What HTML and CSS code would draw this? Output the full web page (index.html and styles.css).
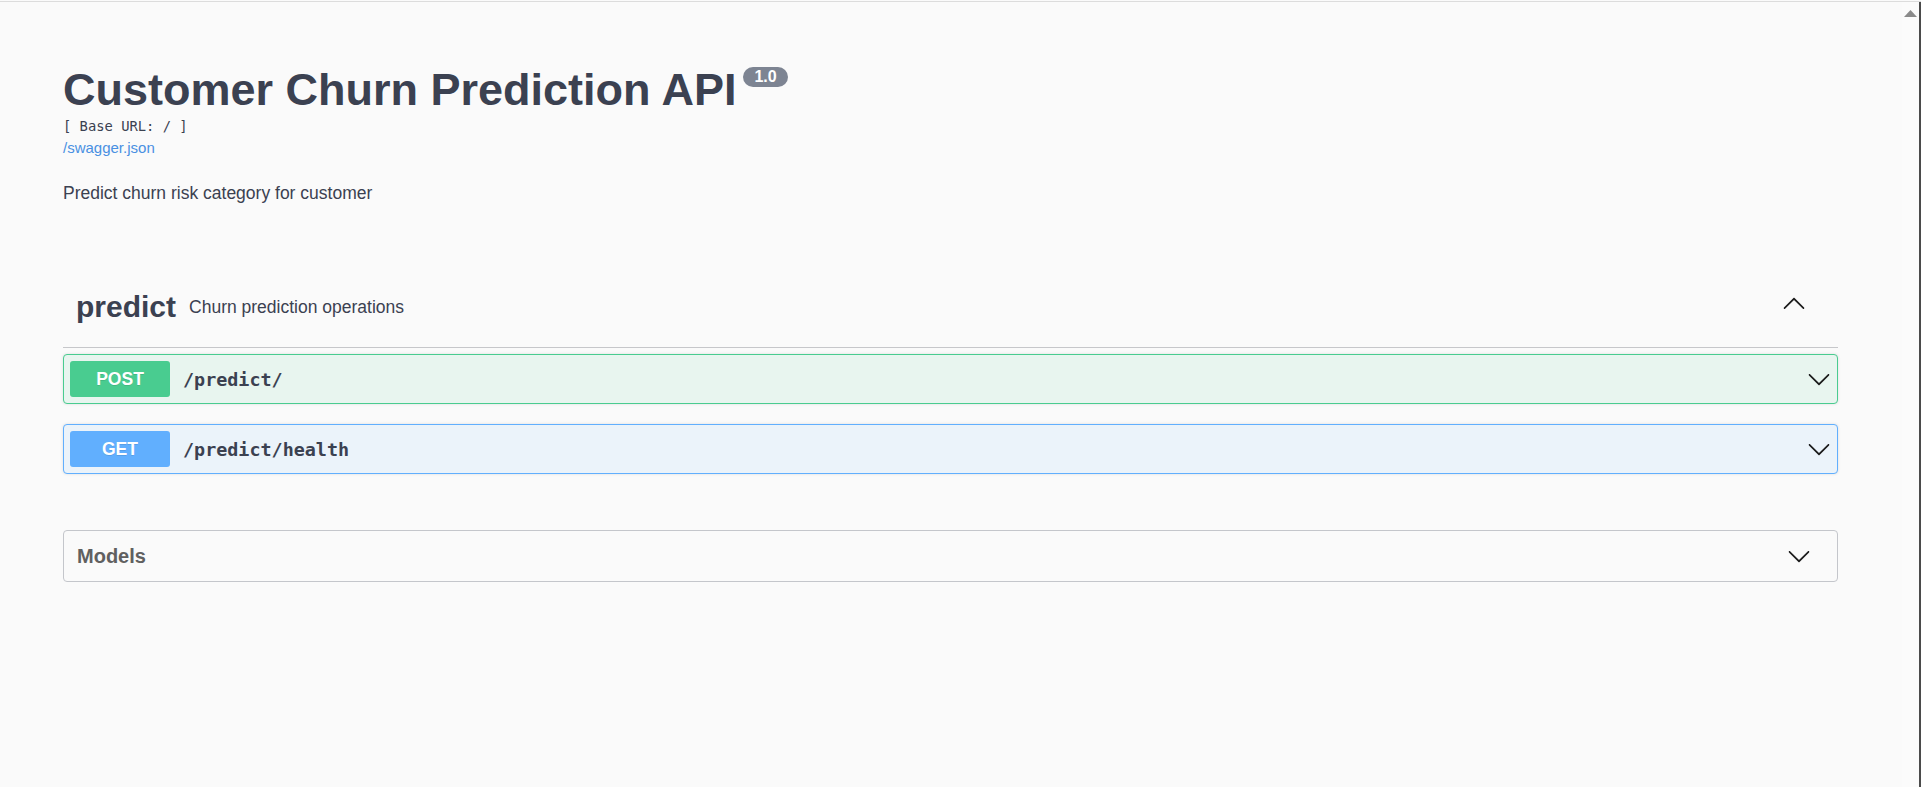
FILE: index.html
```html
<!DOCTYPE html>
<html lang="en">
<head>
<meta charset="utf-8">
<title>Customer Churn Prediction API</title>
<link rel="stylesheet" href="styles.css">
</head>
<body>
<div class="topline"></div>
<div class="layout">
  <main class="main">
    <section class="info">
      <h2 class="title"><span>Customer Churn Prediction API</span><span class="version">1.0</span></h2>
      <div class="base-url">[ Base URL: / ]</div>
      <a class="spec-link" href="#">/swagger.json</a>
      <p class="description">Predict churn risk category for customer</p>
    </section>

    <section class="tag">
      <div class="tag-header">
        <span class="tag-name">predict</span>
        <span class="tag-desc">Churn prediction operations</span>
        <svg class="arrow arrow-up" viewBox="0 0 20 20" width="24" height="24"><path d="M17.418 6.109c.272-.268.709-.268.979 0s.271.701 0 .969l-7.908 7.830c-.27.268-.707.268-.979 0l-7.908-7.830c-.27-.268-.27-.701 0-.969.271-.268.709-.268.979 0L10 13.250l7.418-7.141z"/></svg>
      </div>
      <div class="ops">
        <div class="op op-post">
          <span class="method">POST</span>
          <span class="path">/predict/</span>
          <svg class="arrow" viewBox="0 0 20 20" width="24" height="24"><path d="M17.418 6.109c.272-.268.709-.268.979 0s.271.701 0 .969l-7.908 7.830c-.27.268-.707.268-.979 0l-7.908-7.830c-.27-.268-.27-.701 0-.969.271-.268.709-.268.979 0L10 13.250l7.418-7.141z"/></svg>
        </div>
        <div class="op op-get">
          <span class="method">GET</span>
          <span class="path">/predict/health</span>
          <svg class="arrow" viewBox="0 0 20 20" width="24" height="24"><path d="M17.418 6.109c.272-.268.709-.268.979 0s.271.701 0 .969l-7.908 7.830c-.27.268-.707.268-.979 0l-7.908-7.830c-.27-.268-.27-.701 0-.969.271-.268.709-.268.979 0L10 13.250l7.418-7.141z"/></svg>
        </div>
      </div>
    </section>

    <section class="models">
      <span class="models-title">Models</span>
      <svg class="arrow" viewBox="0 0 20 20" width="24" height="24"><path d="M17.418 6.109c.272-.268.709-.268.979 0s.271.701 0 .969l-7.908 7.830c-.27.268-.707.268-.979 0l-7.908-7.830c-.27-.268-.27-.701 0-.969.271-.268.709-.268.979 0L10 13.250l7.418-7.141z"/></svg>
    </section>
  </main>
  <div class="scrollbar">
    <svg class="scroll-up" viewBox="0 0 13 7" width="13" height="7"><polygon points="6.5,0 13,7 0,7"/></svg>
  </div>
</div>
</body>
</html>
```

FILE: styles.css
```css
html, body {
  margin: 0;
  padding: 0;
  background: #fafafa;
}

body {
  font-family: "Liberation Sans", Arial, sans-serif;
  color: #3b4151;
  overflow: hidden;
  height: 787px;
}

.topline {
  margin-top: 1px;
  height: 1px;
  background: #dcdcdc;
}

.layout {
  display: flex;
  height: 785px;
}

.main {
  flex: 1;
  min-width: 0;
  padding: 0 64px 0 63px;
}

.scrollbar {
  width: 17px;
  border-right: 2px solid #4b4b4b;
  background: #fbfbfb;
  display: flex;
  justify-content: center;
  align-items: flex-start;
}

.scroll-up {
  margin-top: 8px;
  fill: #8a8a8a;
}

/* info */
.info {
  padding-top: 62px;
}

.title {
  margin: 0;
  display: flex;
  align-items: flex-start;
  font-size: 45px;
  line-height: 52px;
  font-weight: 700;
  color: #3b4151;
}

.version {
  margin: 3px 0 0 7px;
  padding: 0 11px;
  height: 20px;
  border-radius: 57px;
  background: #7d8492;
  color: #fff;
  font-size: 16px;
  line-height: 20px;
  font-weight: 700;
}

.base-url {
  margin-top: 2px;
  font-family: "DejaVu Sans Mono", monospace;
  font-size: 13.8px;
  line-height: 16px;
  color: #3b4151;
}

.spec-link {
  display: block;
  margin-top: 5px;
  font-size: 15px;
  line-height: 17px;
  color: #4990e2;
  text-decoration: none;
}

.description {
  margin: 27px 0 0;
  font-size: 17.5px;
  line-height: 21px;
  color: #3b4151;
}

/* tag */
.tag {
  margin-top: 86px;
}

.tag-header {
  display: flex;
  align-items: center;
  padding: 0 32px 23px 13px;
  border-bottom: 1px solid #c6c7ca;
}

.tag-name {
  font-size: 30px;
  line-height: 34px;
  font-weight: 700;
}

.tag-desc {
  margin-left: 13px;
  font-size: 17.5px;
  line-height: 20px;
  flex: 1;
}

.arrow {
  display: block;
  flex: none;
  fill: #1b1b1b;
}

.arrow-up {
  transform: rotate(180deg);
  margin-bottom: 6px;
}

.ops {
  margin-top: 6px;
  display: flex;
  flex-direction: column;
  gap: 20px;
}

.op {
  box-sizing: border-box;
  height: 50px;
  display: flex;
  align-items: center;
  padding: 0 6px;
  border: 1px solid;
  border-radius: 4px;
  box-shadow: 0 0 3px rgba(0, 0, 0, 0.12);
}

.op-post {
  background: #e8f5ef;
  border-color: #49cc90;
}

.op-get {
  background: #ebf3fa;
  border-color: #61affe;
}

.method {
  width: 100px;
  height: 36px;
  border-radius: 3px;
  display: flex;
  align-items: center;
  justify-content: center;
  color: #fff;
  font-size: 17.5px;
  font-weight: 700;
  text-shadow: 0 1px 0 rgba(0, 0, 0, 0.1);
}

.op-post .method {
  background: #49cc90;
}

.op-get .method {
  background: #61affe;
}

.path {
  flex: 1;
  padding-left: 13px;
  font-family: "DejaVu Sans Mono", monospace;
  font-size: 18.4px;
  font-weight: 700;
  color: #3b4151;
}

/* models */
.models {
  box-sizing: border-box;
  margin-top: 56px;
  height: 52px;
  display: flex;
  align-items: center;
  padding: 0 26px 0 13px;
  border: 1px solid #c4c6cb;
  border-radius: 4px;
}

.models-title {
  flex: 1;
  font-size: 20px;
  font-weight: 700;
  color: #606060;
}
```
